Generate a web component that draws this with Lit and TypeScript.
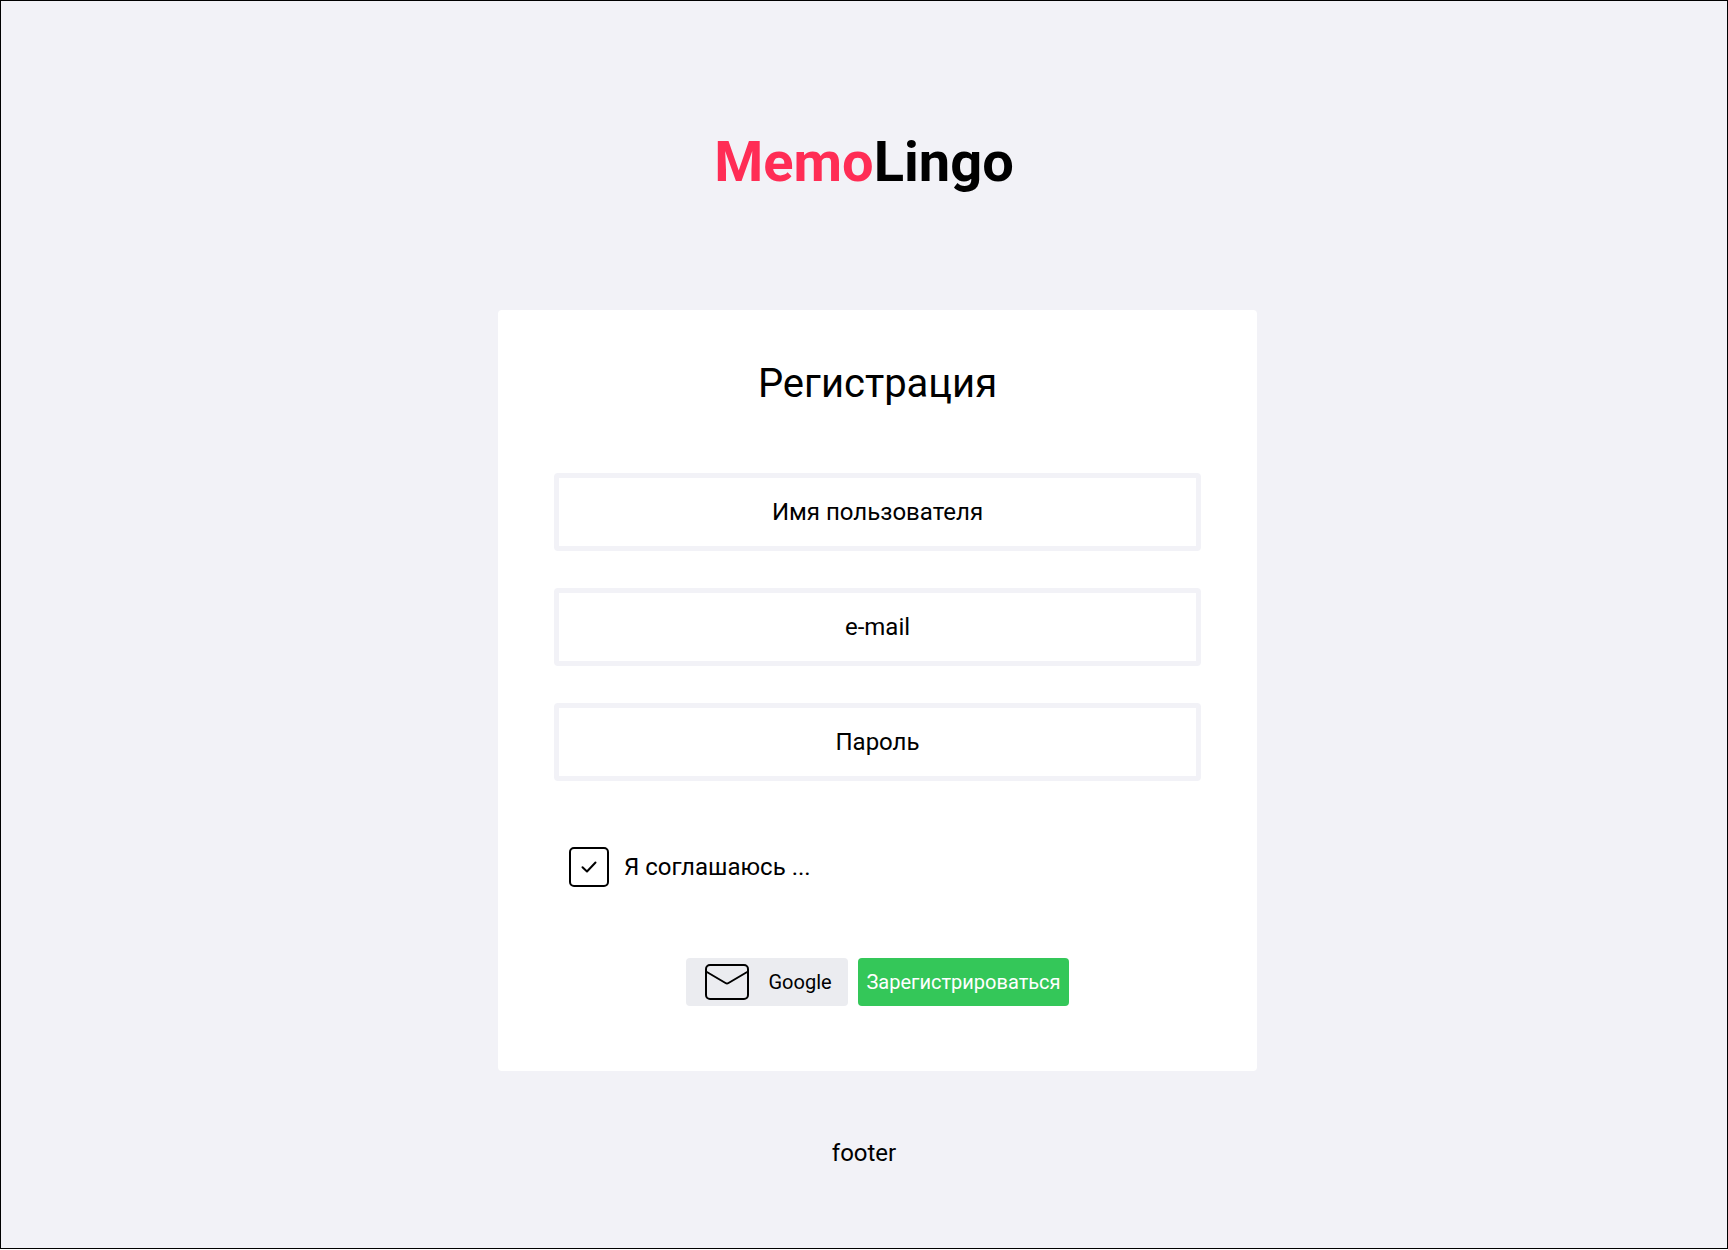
import { LitElement, html, css } from "lit";
import { customElement } from "lit/decorators.js";

@customElement("app-root")
export class AppRoot extends LitElement {
  static styles = css`
    :host {
      display: block;
      font-family: Roboto, "Liberation Sans", sans-serif;
      color: #000;
    }
    .page {
      box-sizing: border-box;
      width: 1728px;
      height: 1249px;
      border: 1px solid #000;
      background: #f2f2f7;
      display: flex;
      flex-direction: column;
      align-items: center;
    }
    .logo {
      margin: 128px 0 0;
      font-size: 56px;
      line-height: 66px;
      font-weight: 700;
    }
    .accent {
      color: #ff2d55;
    }
    .card {
      box-sizing: border-box;
      width: 759px;
      height: 761px;
      margin: 115px 0 0 27px;
      padding: 50px 56px 0;
      border-radius: 4px;
      background: #fff;
      display: flex;
      flex-direction: column;
    }
    .title {
      margin: 0;
      font-size: 40px;
      line-height: 47px;
      font-weight: 400;
      text-align: center;
    }
    .fields {
      margin-top: 66px;
      display: flex;
      flex-direction: column;
      gap: 37px;
    }
    .field {
      box-sizing: border-box;
      height: 78px;
      border: 5px solid #f2f2f7;
      border-radius: 4px;
      display: flex;
      align-items: center;
      justify-content: center;
      font-size: 24px;
      line-height: 28px;
    }
    .agree {
      margin: 66px 0 0 15px;
      display: flex;
      align-items: center;
      gap: 15px;
      font-size: 24px;
      line-height: 28px;
    }
    .check,
    .mail {
      display: block;
      flex: none;
    }
    .actions {
      margin-top: 71px;
      display: flex;
      justify-content: center;
      gap: 10px;
    }
    .button {
      box-sizing: border-box;
      height: 48px;
      border: 0;
      border-radius: 4px;
      display: flex;
      align-items: center;
      font: inherit;
      font-size: 20px;
      line-height: 24px;
    }
    .google {
      width: 162px;
      padding: 0 0 0 19px;
      gap: 19.5px;
      background: #ebecf0;
      color: #000;
    }
    .submit {
      width: 211px;
      padding: 0;
      justify-content: center;
      background: #34c759;
      color: #fff;
    }
    .footer {
      margin-top: 68px;
      font-size: 24px;
      line-height: 28px;
    }
  `;

  private fields = ["Имя пользователя", "e-mail", "Пароль"];

  render() {
    return html`
      <div class="page">
        <h1 class="logo"><span class="accent">Memo</span>Lingo</h1>
        <main class="card">
          <h2 class="title">Регистрация</h2>
          <div class="fields">
            ${this.fields.map((name) => html`<div class="field">${name}</div>`)}
          </div>
          <div class="agree">
            <svg class="check" width="40" height="40" viewBox="0 0 40 40" fill="none" stroke="#000" stroke-width="2">
              <rect x="1" y="1" width="38" height="38" rx="4" />
              <path d="M13.5 20.2L18 24.5L26.5 15.5" stroke-linecap="round" stroke-linejoin="round" />
            </svg>
            <span>Я соглашаюсь ...</span>
          </div>
          <div class="actions">
            <button class="button google">
              <svg class="mail" width="44" height="36" viewBox="0 0 44 36" fill="none" stroke="#000" stroke-width="2">
                <rect x="1" y="1" width="42" height="34" rx="4" />
                <path d="M1 7.5L20.5 19Q22 19.9 23.5 19L43 7.5" />
              </svg>
              <span>Google</span>
            </button>
            <button class="button submit">Зарегистрироваться</button>
          </div>
        </main>
        <footer class="footer">footer</footer>
      </div>
    `;
  }
}
